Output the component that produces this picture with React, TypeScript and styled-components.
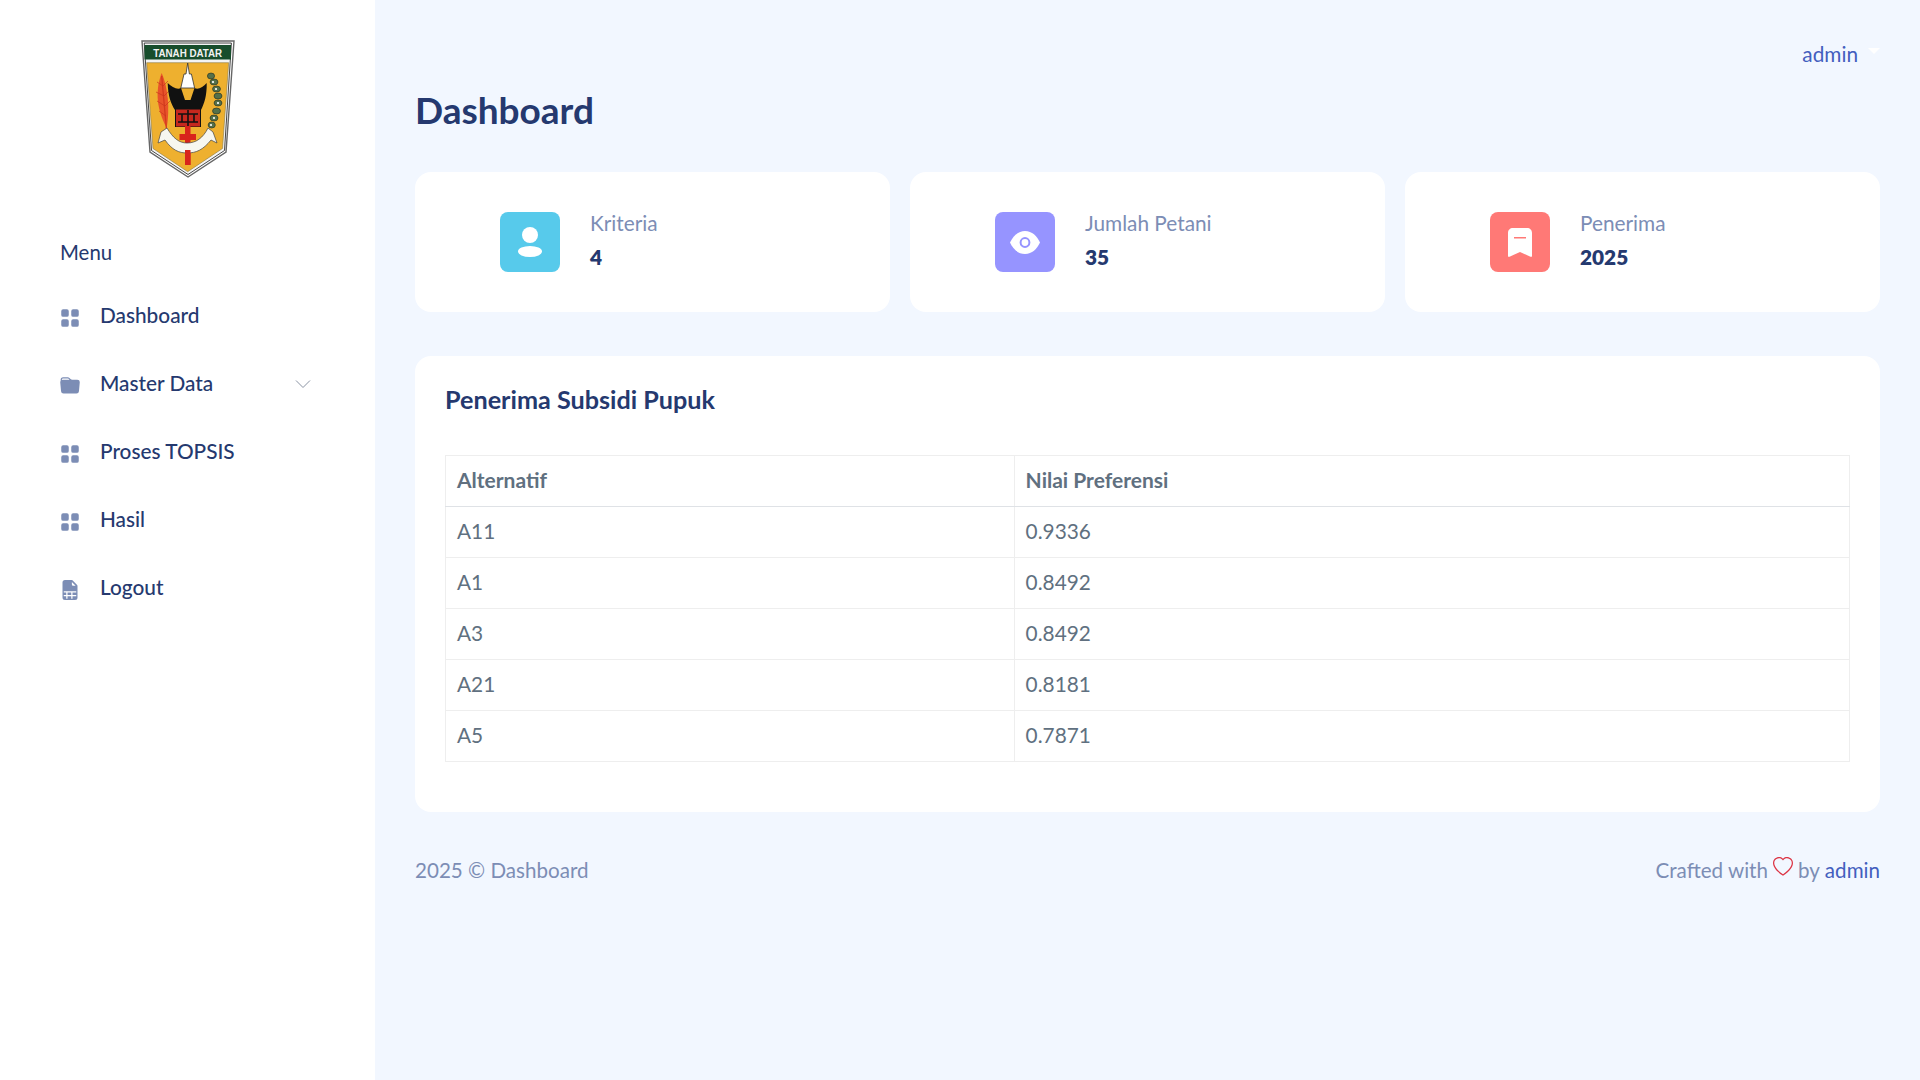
import React from "react";
import styled, { createGlobalStyle } from "styled-components";
import { BsGridFill, BsFolderFill, BsFileEarmarkSpreadsheetFill, BsHeart } from "react-icons/bs";

const Global = createGlobalStyle`
  html, body { margin: 0; padding: 0; background: #f2f7ff; }
  body { font-family: "Lato", "Noto Sans", "Liberation Sans", sans-serif; font-size: 20.8px; color: #607080; }
`;

const Layout = styled.div`
  display: flex;
  min-height: 1080px;
`;
const Sidebar = styled.aside`
  width: 375px;
  flex: none;
  background: #fff;
  padding: 40px 60px 0;
  box-sizing: border-box;
`;
const LogoWrap = styled.div`
  display: flex;
  justify-content: center;
  height: 137px;
  margin-bottom: 61px;
`;
const MenuTitle = styled.div`
  color: #25396f;
  font-size: 20.4px;
  line-height: 28px;
  margin-bottom: 30px;
`;
const MenuList = styled.nav`
  display: flex;
  flex-direction: column;
  gap: 28px;
`;
const MenuItem = styled.div`
  display: flex;
  align-items: center;
  height: 40px;
  gap: 20px;
  color: #25396f;
  font-size: 20.8px;
  font-weight: 500;
  line-height: 38px;
  svg.lead { color: #7c8db5; width: 20px; height: 20px; flex: none; margin-top: 3px; }
`;
const MenuLabel = styled.span`
  padding-bottom: 2px;
`;
const Chevron = styled.svg`
  width: 16px;
  height: 10px;
  margin-left: auto;
  margin-right: 4px;
  margin-top: -1px;
  color: #8a93a3;
`;
const Main = styled.main`
  flex: 1;
  padding: 34px 40px 0;
  min-width: 0;
`;
const TopBar = styled.div`
  display: flex;
  justify-content: flex-end;
  align-items: center;
  height: 40px;
`;
const UserLink = styled.div`
  color: #435ebe;
  font-size: 20.8px;
  display: flex;
  align-items: center;
  gap: 10px;
  padding-bottom: 2px;
`;
const Caret = styled.span`
  width: 0;
  height: 0;
  border-left: 6px solid transparent;
  border-right: 6px solid transparent;
  border-top: 6px solid #fff;
  margin-top: -4px;
`;
const Title = styled.h1`
  margin: 14px 0 40px;
  color: #25396f;
  font-size: 37px;
  line-height: 43px;
  padding-bottom: 1px;
  font-weight: 700;
`;
const Stats = styled.div`
  display: grid;
  grid-template-columns: repeat(3, 1fr);
  gap: 20px;
  margin-bottom: 44px;
`;
const Card = styled.section`
  background: #fff;
  border-radius: 16px;
`;
const StatCard = styled(Card)`
  height: 140px;
  display: flex;
  align-items: center;
  padding-left: 85px;
  gap: 30px;
`;
const IconBox = styled.div<{ $color: string }>`
  width: 60px;
  height: 60px;
  border-radius: 8px;
  background: ${(p) => p.$color};
  display: flex;
  align-items: center;
  justify-content: center;
  flex: none;
`;
const StatText = styled.div`
  display: flex;
  flex-direction: column;
  gap: 6px;
  padding-bottom: 5px;
`;
const StatLabel = styled.div`
  color: #7c8db5;
  font-size: 20.8px;
  line-height: 28px;
`;
const StatValue = styled.div`
  color: #25396f;
  font-size: 20.8px;
  line-height: 28px;
  font-weight: 800;
`;
const TableCard = styled(Card)`
  height: 456px;
  padding: 24px 30px 0;
  box-sizing: border-box;
`;
const CardTitle = styled.h2`
  margin: 0 0 36px;
  color: #25396f;
  font-size: 25.2px;
  line-height: 39px;
  font-weight: 700;
`;
const Table = styled.table`
  width: 100%;
  border-collapse: collapse;
  table-layout: fixed;
`;
const Th = styled.th`
  height: 51px;
  padding: 0 10px 3px 11px;
  box-sizing: border-box;
  border: 1px solid #eeeeee;
  border-bottom: 1.5px solid #dfe2e6;
  font-size: 21px;
  font-weight: 700;
  text-align: left;
  color: #607080;
`;
const Td = styled.td`
  height: 51px;
  padding: 0 10px 3px 11px;
  box-sizing: border-box;
  border: 1px solid #eeeeee;
  font-size: 20.8px;
  color: #607080;
`;
const Footer = styled.footer`
  display: flex;
  justify-content: space-between;
  align-items: center;
  margin-top: 44px;
  color: #7c8db5;
  font-size: 20.6px;
  line-height: 28px;
`;
const FooterRight = styled.div`
  display: flex;
  align-items: center;
  gap: 5px;
`;
const HeartIcon = styled(BsHeart)`
  color: #dc3545;
  width: 20px;
  height: 20px;
  margin-top: -6px;
`;
const AdminLink = styled.span`
  color: #435ebe;
`;

const Logo = () => (
  <svg width="94" height="139" viewBox="0 0 94 139">
    <path d="M1 1H93L85 112L47 137L9 112Z" fill="#fff" stroke="#666" strokeWidth="1.4" />
    <path d="M3.2 3H90.4L83.5 110.5L47 134.5L10.5 110.5Z" fill="#f4f4f4" stroke="#333" strokeWidth="0.9" />
    <rect x="3.5" y="5" width="86.5" height="14.5" fill="#174d2c" />
    <text x="46.7" y="16.5" fill="#f2f2f2" fontSize="11.5" fontWeight="700" textAnchor="middle" fontFamily="Liberation Sans, sans-serif" textLength="69" lengthAdjust="spacingAndGlyphs">TANAH DATAR</text>
    <path d="M5.7 22.7H87.7L81.5 108.5L46.7 131.7L12 108.5Z" fill="#eeb02f" stroke="#8a7a45" strokeWidth="0.6" />
    <path d="M20.7 33C15 48 14 66 25.7 88C29 68 27 48 20.7 33Z" fill="#e8532a" />
    <path d="M20.7 36L25.7 92" stroke="#d23a1e" strokeWidth="1.3" />
    <path d="M22 46l-6-4M22 46l5-5M23 56l-8-4M23 56l5-5M24 66l-8-5M24 66l5-5M25 76l-7-5" stroke="#c9351c" strokeWidth="0.7" />
    <path d="M46.7 23l1.7 11h2l3.2 14H39.8l3.2-14h2Z" fill="#fff" stroke="#333" strokeWidth="0.8" />
    <path d="M26.7 43C31 47 36 50 40 48L44 60H49.5L53.5 48C57.5 50 62 47 65.7 43C66 56 63 64 60 70V87H34V70C30 64 27 56 26.7 43Z" fill="#111" />
    <rect x="35" y="69.5" width="24" height="17" fill="#c6281e" />
    <path d="M37 74H57M37 82H57M47 70V86M41 74V82M53 74V82" stroke="#111" strokeWidth="1.6" />
    <path d="M44 86H49.5V94H55V100H49.5V125H44V100H38.5V94H44Z" fill="#d8241c" />
    <path d="M20 92L26 88C32 98 38 103 46 103C55 103 62 98 67 88L72 92L76 103L70 100C62 110 55 113 46 113C38 113 31 110 24 100L17 103Z" fill="#f7f7f0" stroke="#444" strokeWidth="0.7" />
    <path d="M44 110H49.5V125H44Z" fill="#d8241c" />
    <g fill="#55704a" stroke="#1e2a1e" strokeWidth="0.6">
      <ellipse cx="70" cy="36" rx="3.6" ry="3" /><ellipse cx="73" cy="42" rx="4" ry="3" /><ellipse cx="75.5" cy="49" rx="4" ry="3" />
      <ellipse cx="77" cy="56" rx="4" ry="3" /><ellipse cx="77" cy="63" rx="4" ry="3" /><ellipse cx="75.5" cy="71" rx="4" ry="3" /><ellipse cx="73" cy="78" rx="4" ry="3" /><ellipse cx="70.7" cy="85" rx="3.6" ry="3" />
    </g>
    <g fill="#fff">
      <circle cx="72" cy="42" r="1.1" /><circle cx="75" cy="49" r="1.1" /><circle cx="77" cy="63" r="1.1" /><circle cx="73" cy="78" r="1.1" /><circle cx="70" cy="85" r="1.1" />
    </g>
  </svg>
);

const ProfileIcon = () => (
  <svg width="24" height="30" viewBox="0 0 24 30" fill="#fff">
    <circle cx="12" cy="8" r="8" />
    <ellipse cx="12" cy="24.5" rx="12" ry="5.5" />
  </svg>
);
const EyeIcon = () => (
  <svg width="30" height="23" viewBox="0 0 30 23">
    <path d="M15 0C22 0 27 5 30 11.5C27 18 22 23 15 23C8 23 3 18 0 11.5C3 5 8 0 15 0Z" fill="#fff" />
    <circle cx="15" cy="11.5" r="4.4" fill="none" stroke="#9694ff" strokeWidth="2" />
  </svg>
);
const BookmarkIcon = () => (
  <svg width="24" height="29" viewBox="0 0 24 29">
    <path d="M5 0H19C22 0 24 2 24 5V28C24 29 23 29 22.5 28.7L12 24L1.5 28.7C1 29 0 29 0 28V5C0 2 2 0 5 0Z" fill="#fff" />
    <rect x="6" y="9" width="12" height="1.5" fill="#ff7976" />
  </svg>
);

const menu = [
  { label: "Dashboard", Icon: BsGridFill },
  { label: "Master Data", Icon: BsFolderFill, arrow: true },
  { label: "Proses TOPSIS", Icon: BsGridFill },
  { label: "Hasil", Icon: BsGridFill },
  { label: "Logout", Icon: BsFileEarmarkSpreadsheetFill },
];
const stats = [
  { label: "Kriteria", value: "4", color: "#57caeb", Icon: ProfileIcon },
  { label: "Jumlah Petani", value: "35", color: "#9694ff", Icon: EyeIcon },
  { label: "Penerima", value: "2025", color: "#ff7976", Icon: BookmarkIcon },
];
const rows = [
  ["A11", "0.9336"],
  ["A1", "0.8492"],
  ["A3", "0.8492"],
  ["A21", "0.8181"],
  ["A5", "0.7871"],
];

export default function App() {
  return (
    <Layout>
      <Global />
      <Sidebar>
        <LogoWrap><Logo /></LogoWrap>
        <MenuTitle>Menu</MenuTitle>
        <MenuList>
          {menu.map((m) => (
            <MenuItem key={m.label}>
              <m.Icon className="lead" />
              <MenuLabel>{m.label}</MenuLabel>
              {m.arrow && (
                <Chevron viewBox="0 0 16 10" fill="none" stroke="currentColor" strokeWidth="1">
                  <path d="M1 1.5L8 8.5L15 1.5" />
                </Chevron>
              )}
            </MenuItem>
          ))}
        </MenuList>
      </Sidebar>
      <Main>
        <TopBar>
          <UserLink>admin<Caret /></UserLink>
        </TopBar>
        <Title>Dashboard</Title>
        <Stats>
          {stats.map((s) => (
            <StatCard key={s.label}>
              <IconBox $color={s.color}><s.Icon /></IconBox>
              <StatText>
                <StatLabel>{s.label}</StatLabel>
                <StatValue>{s.value}</StatValue>
              </StatText>
            </StatCard>
          ))}
        </Stats>
        <TableCard>
          <CardTitle>Penerima Subsidi Pupuk</CardTitle>
          <Table>
            <colgroup>
              <col style={{ width: "40.5%" }} />
              <col />
            </colgroup>
            <thead>
              <tr><Th>Alternatif</Th><Th>Nilai Preferensi</Th></tr>
            </thead>
            <tbody>
              {rows.map((r) => (
                <tr key={r[0]}><Td>{r[0]}</Td><Td>{r[1]}</Td></tr>
              ))}
            </tbody>
          </Table>
        </TableCard>
        <Footer>
          <div>2025 © Dashboard</div>
          <FooterRight>Crafted with <HeartIcon /> by <AdminLink>admin</AdminLink></FooterRight>
        </Footer>
      </Main>
    </Layout>
  );
}
